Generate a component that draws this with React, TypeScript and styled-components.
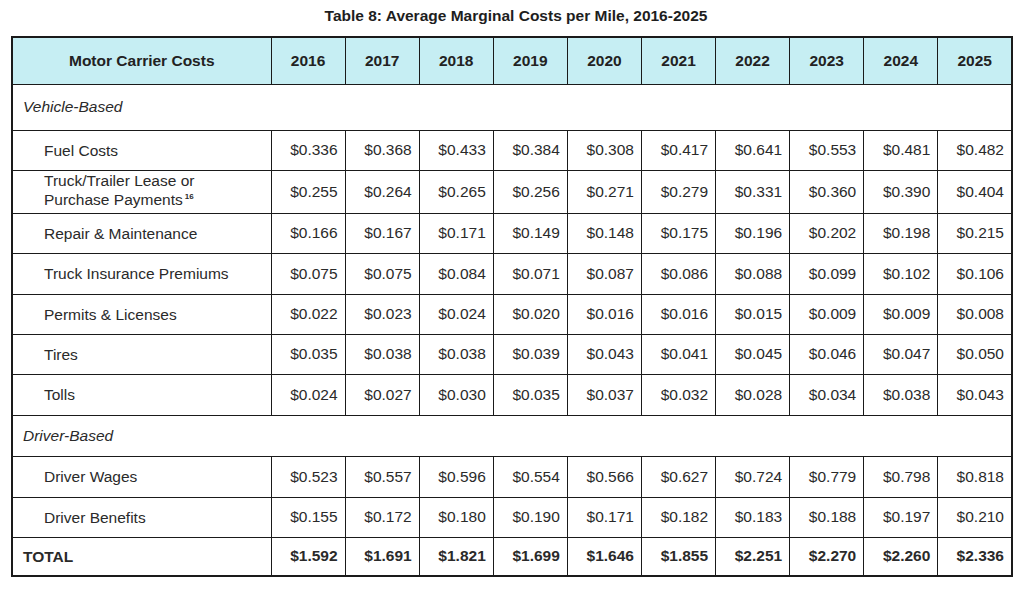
import React from 'react';
import styled, { createGlobalStyle } from 'styled-components';

const GlobalStyle = createGlobalStyle`
  html, body {
    margin: 0;
    padding: 0;
    background: #ffffff;
  }
  body {
    font-family: "Liberation Sans", Arial, sans-serif;
    color: #222;
  }
`;

interface CostRow {
  label: string[];
  note?: string;
  values: string[];
  height: number;
}

interface Section {
  title: string;
  height: number;
  rows: CostRow[];
}

const years = ['2016', '2017', '2018', '2019', '2020', '2021', '2022', '2023', '2024', '2025'];

const sections: Section[] = [
  {
    title: 'Vehicle-Based',
    height: 46,
    rows: [
      { label: ['Fuel Costs'], height: 40, values: ['$0.336', '$0.368', '$0.433', '$0.384', '$0.308', '$0.417', '$0.641', '$0.553', '$0.481', '$0.482'] },
      { label: ['Truck/Trailer Lease or', 'Purchase Payments'], note: '16', height: 43, values: ['$0.255', '$0.264', '$0.265', '$0.256', '$0.271', '$0.279', '$0.331', '$0.360', '$0.390', '$0.404'] },
      { label: ['Repair & Maintenance'], height: 40, values: ['$0.166', '$0.167', '$0.171', '$0.149', '$0.148', '$0.175', '$0.196', '$0.202', '$0.198', '$0.215'] },
      { label: ['Truck Insurance Premiums'], height: 41, values: ['$0.075', '$0.075', '$0.084', '$0.071', '$0.087', '$0.086', '$0.088', '$0.099', '$0.102', '$0.106'] },
      { label: ['Permits & Licenses'], height: 40, values: ['$0.022', '$0.023', '$0.024', '$0.020', '$0.016', '$0.016', '$0.015', '$0.009', '$0.009', '$0.008'] },
      { label: ['Tires'], height: 40, values: ['$0.035', '$0.038', '$0.038', '$0.039', '$0.043', '$0.041', '$0.045', '$0.046', '$0.047', '$0.050'] },
      { label: ['Tolls'], height: 41, values: ['$0.024', '$0.027', '$0.030', '$0.035', '$0.037', '$0.032', '$0.028', '$0.034', '$0.038', '$0.043'] },
    ],
  },
  {
    title: 'Driver-Based',
    height: 41,
    rows: [
      { label: ['Driver Wages'], height: 41, values: ['$0.523', '$0.557', '$0.596', '$0.554', '$0.566', '$0.627', '$0.724', '$0.779', '$0.798', '$0.818'] },
      { label: ['Driver Benefits'], height: 40, values: ['$0.155', '$0.172', '$0.180', '$0.190', '$0.171', '$0.182', '$0.183', '$0.188', '$0.197', '$0.210'] },
    ],
  },
];

const totals = ['$1.592', '$1.691', '$1.821', '$1.699', '$1.646', '$1.855', '$2.251', '$2.270', '$2.260', '$2.336'];

const Page = styled.div`
  padding: 7px 11px 0;
`;

const Title = styled.h1`
  margin: 0 0 11px;
  font-size: 15.5px;
  line-height: 18px;
  font-weight: bold;
  text-align: center;
  color: #1e1e1e;
  padding-left: 8px;
`;

const Table = styled.table`
  width: 1002px;
  table-layout: fixed;
  border-collapse: collapse;
  border: 2px solid #1a1a1a;
  font-size: 15.5px;
`;

const LabelCol = styled.col`
  width: 259px;
`;

const Row = styled.tr<{ $height: number }>`
  height: ${p => p.$height}px;
`;

const HeadCell = styled.th`
  background: #c6eef3;
  border: 1px solid #1a1a1a;
  font-weight: bold;
  text-align: center;
  color: #222;
  padding: 0 4px;
`;

const SectionCell = styled.td`
  border: 1px solid #1a1a1a;
  font-style: italic;
  padding: 0 10px;
  color: #2a2a2a;
`;

const LabelCell = styled.td<{ $bold?: boolean }>`
  border: 1px solid #1a1a1a;
  padding: 0 6px 0 ${p => (p.$bold ? '10px' : '31px')};
  line-height: 19px;
  font-weight: ${p => (p.$bold ? 'bold' : 'normal')};
  color: #2a2a2a;
  white-space: nowrap;
`;

const LabelLine = styled.div`
  display: block;
`;

const ValueCell = styled.td<{ $bold?: boolean }>`
  border: 1px solid #1a1a1a;
  padding: 0 7px 0 0;
  text-align: right;
  font-weight: ${p => (p.$bold ? 'bold' : 'normal')};
  color: #2a2a2a;
  white-space: nowrap;
`;

const Note = styled.span`
  font-size: 8px;
  font-weight: bold;
  position: relative;
  top: -6px;
  margin-left: 2px;
`;

export default function App() {
  return (
    <>
      <GlobalStyle />
      <Page>
        <Title>Table 8: Average Marginal Costs per Mile, 2016-2025</Title>
        <Table>
          <colgroup>
            <LabelCol />
            {years.map(y => (
              <col key={y} />
            ))}
          </colgroup>
          <thead>
            <Row $height={47}>
              <HeadCell>Motor Carrier Costs</HeadCell>
              {years.map(y => (
                <HeadCell key={y}>{y}</HeadCell>
              ))}
            </Row>
          </thead>
          <tbody>
            {sections.map(section => (
              <React.Fragment key={section.title}>
                <Row $height={section.height}>
                  <SectionCell colSpan={11}>{section.title}</SectionCell>
                </Row>
                {section.rows.map(row => (
                  <Row key={row.label.join(' ')} $height={row.height}>
                    <LabelCell>
                      {row.label.map((line, i) => (
                        <LabelLine key={i}>
                          {line}
                          {row.note && i === row.label.length - 1 && <Note>{row.note}</Note>}
                        </LabelLine>
                      ))}
                    </LabelCell>
                    {row.values.map((v, i) => (
                      <ValueCell key={i}>{v}</ValueCell>
                    ))}
                  </Row>
                ))}
              </React.Fragment>
            ))}
            <Row $height={39}>
              <LabelCell $bold>TOTAL</LabelCell>
              {totals.map((v, i) => (
                <ValueCell key={i} $bold>{v}</ValueCell>
              ))}
            </Row>
          </tbody>
        </Table>
      </Page>
    </>
  );
}
